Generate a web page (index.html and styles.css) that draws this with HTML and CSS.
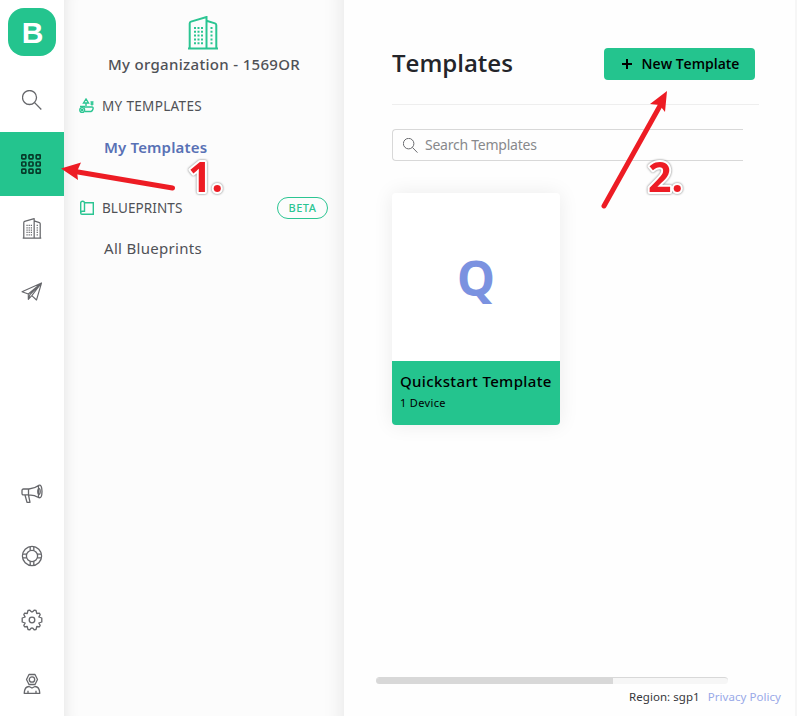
FILE: index.html
```html
<!DOCTYPE html>
<html lang="en">
<head>
<meta charset="utf-8">
<title>Templates</title>
<link rel="stylesheet" href="styles.css">
</head>
<body>
<svg class="defs" width="0" height="0">
  <symbol id="search" viewBox="0 0 20 20"><circle cx="7.5" cy="7.5" r="7"/><path d="M12.6 12.6 19.3 19.5"/></symbol>
  <symbol id="building" viewBox="0 0 32 34">
    <path d="M1 32.5H31M2.7 32V7.5Q2.7 6 4 5.6L19.5 1V32M19.5 4.8 28 7.4Q29.3 7.9 29.3 9.2V32"/>
    <path class="windows" d="M8 11V29M11.5 11V29M15 11V29M24.5 11V29"/>
  </symbol>
</svg>
<div class="app">
  <nav class="rail">
    <div class="logo">B</div>
    <a class="rail-item"><svg class="icon" width="20" height="20"><use href="#search"/></svg></a>
    <a class="rail-item active"><svg class="icon" width="20" height="20" viewBox="0 0 20 20">
      <g id="row"><rect x=".8" y=".8" width="4" height="4" rx=".8"/><rect x="8" y=".8" width="4" height="4" rx=".8"/><rect x="15.2" y=".8" width="4" height="4" rx=".8"/></g>
      <use href="#row" y="7.2"/><use href="#row" y="14.4"/></svg></a>
    <a class="rail-item"><svg class="icon building-small" width="20" height="21"><use href="#building"/></svg></a>
    <a class="rail-item"><svg class="icon plane" width="22" height="20" viewBox="0 0 22 20"><path d="M1 9.8 20.5 1 15.5 18 10.8 13.6 7.3 17.3V12ZM1 9.800 7.300 12M20.5 1 7.3 12M20.5 1 9 12.5 7.3 17.3M20.5 1 10.8 13.6"/></svg></a>
    <span class="spacer"></span>
    <a class="rail-item"><svg class="icon megaphone" width="22" height="20" viewBox="0 0 22 20"><path d="M2.5 5H8Q14 4.3 17.5 1.4V13.5Q14 11 8 10.8H2.5Q1 10.8 1 9.3V6.5Q1 5 2.5 5ZM7.5 5V10.8M4 11 6 18.3H9L7.5 11M17.5 1.4Q21 0 21 7.5T17.5 13.5"/><ellipse cx="18" cy="7.5" rx="1.2" ry="2.8"/></svg></a>
    <a class="rail-item"><svg class="icon" width="22" height="22" viewBox="0 0 22 22"><circle cx="11" cy="11" r="9.6"/><circle cx="11" cy="11" r="5.6"/><path d="M9.2 1.6V5.6M12.8 1.6V5.6M9.2 16.4V20.4M12.8 16.4V20.4M1.6 9.2H5.6M1.6 12.8H5.6M16.4 9.2H20.4M16.4 12.8H20.4"/></svg></a>
    <a class="rail-item"><svg class="icon" width="22" height="22" viewBox="0 0 22 22"><path d="M7 1.5 8.800 1.200Q11 4.800 13.200 1.200L15 1.500 15.800 4.500 18.500 4.200 19.200 5.700 17.800 8 20.800 9V13L17.800 14 19.200 16.300 18.500 17.800 15.800 17.500 15 20.500 13.200 20.800Q11 17.200 8.800 20.800L7 20.500 6.200 17.500 3.500 17.800 2.800 16.300 4.200 14 1.200 13V9L4.200 8 2.800 5.700 3.500 4.200 6.200 4.500Z"/><circle cx="11" cy="11" r="2.8"/></svg></a>
    <a class="rail-item"><svg class="icon" width="18" height="22" viewBox="0 0 18 22"><path d="M6 1.5H12L14.5 6.5 12 11.5H6L3.5 6.5ZM1.2 20.3Q1.6 13.5 6 13.5L9 15 12 13.5Q16.4 13.5 16.8 20.3ZM5 20V17.8M13 20V17.8"/><circle cx="9" cy="6.5" r="2.7"/></svg></a>
  </nav>

  <aside class="panel">
    <svg class="org-icon" width="32" height="34"><use href="#building"/></svg>
    <div class="org-name">My organization - 1569OR</div>
    <div class="section">
      <svg width="16" height="16" viewBox="0 0 16 16"><path d="M7 1 4.5 5H9.5ZM7 5V8M13 3.5V7.5M11.5 4H14.500M11.500 6H14.500M5 9H13Q14.5 9 14 11T12 13.5H6M1 8.500H6"/><circle cx="3.200" cy="12" r="2.4"/><circle cx="3.200" cy="12" r=".6"/></svg>
      <span class="my-templates">MY TEMPLATES</span>
    </div>
    <a class="link selected">My Templates</a>
    <div class="section second">
      <svg width="16" height="16" viewBox="0 0 16 16"><path d="M5.5 2.7H14.3V14.3H3Q1.700 14.300 1.700 13V3Q1.700 1.200 3.600 1.200T5.500 3V11.300H3.500Q1.700 11.300 1.700 13"/></svg>
      <span class="blueprints">BLUEPRINTS</span><span class="beta">BETA</span>
    </div>
    <a class="link">All Blueprints</a>
  </aside>

  <main class="main">
    <header class="header">
      <h1>Templates</h1>
      <button class="new"><svg width="12" height="12" viewBox="0 0 12 12"><path d="M6 1V11M1 6H11"/></svg><span>New Template</span></button>
    </header>
    <div class="search"><svg class="icon" width="15" height="15"><use href="#search"/></svg><span>Search Templates</span></div>
    <article class="card">
      <div class="letter">Q</div>
      <div class="info"><div class="name">Quickstart Template</div><div class="count">1 Device</div></div>
    </article>
    <span class="spacer"></span>
    <div class="scrollbar"><div class="thumb"></div></div>
    <footer class="footer"><span class="region">Region: sgp1</span><a class="privacy">Privacy Policy</a></footer>
  </main>
  <svg class="annotations" width="797" height="716" viewBox="0 0 797 716">
    <path class="shaft" d="M172.500 188 75 171.5M604 206 661 104"/>
    <path class="head" d="M61 168.5 81 162.5 77 171.5 78 180ZM667 91 665 112 659.500 105 650 104Z"/>
    <text x="188" y="192">1.</text>
    <text x="648" y="192">2.</text>
  </svg>
</div>
</body>
</html>
```
FILE: styles.css
```css
* { box-sizing: border-box; }
body { margin: 0; font-family: "Noto Sans", sans-serif; color: #4f5156; overflow: hidden; }
.defs { position: absolute; }
svg { fill: none; flex: none; }
.app { display: flex; width: 797px; height: 716px; position: relative; overflow: hidden; background: #fefefe; }
.spacer { flex: 1; }
.icon { stroke: #66676b; stroke-width: 1.3; stroke-linejoin: round; }
.windows { stroke-dasharray: 2 1.8; stroke-width: 2; }

.rail { width: 64px; background: #fff; display: flex; flex-direction: column; }
.logo { width: 48px; height: 48px; margin: 8px 8px 12px; border-radius: 16px; background: #24c48e; color: #fff; font: bold 30px/49px "Liberation Sans", sans-serif; text-align: center; padding-left: 1px; }
.rail-item { height: 64px; flex: none; display: flex; align-items: center; justify-content: center; }
.rail-item .icon { margin-right: 1px; }
.rail-item.active { background: #24c48e; }
.rail-item.active .icon { stroke: #073c2b; stroke-width: 1.7; margin-right: 2px; }
.building-small { stroke-width: 2; }
.plane { stroke-width: 1.1; }
.megaphone { margin-top: 4px; }

.panel { width: 280px; padding: 16px 16px 0; background: #fcfcfc; box-shadow: inset 16px 0 16px -16px #0000001c, inset -24px 0 20px -22px #00000016; display: flex; flex-direction: column; }
.org-icon { stroke: #2bc592; stroke-width: 2; align-self: center; margin-right: 2px; }
.org-name { height: 29px; line-height: 28px; text-align: center; font-size: 15px; font-weight: 500; letter-spacing: .32px; white-space: nowrap; }
.section { height: 22px; margin-top: 16px; display: flex; align-items: center; gap: 7px; font-size: 13.500px; }
.section svg { stroke: #2bc592; stroke-width: 1.4; margin-left: -1px; }
.my-templates { letter-spacing: .33px; }
.blueprints { letter-spacing: .1px; }
.section.second { margin-top: 38px; }
.link { height: 24px; margin: 18px 0 0 24px; line-height: 24px; font-size: 15px; letter-spacing: .3px; }
.link.selected { color: #5871b5; font-weight: 600; letter-spacing: .15px; }
.section.second + .link { margin-top: 17px; }
.beta { margin-left: auto; width: 51px; height: 22px; border: 1px solid #2bc592; border-radius: 11px; color: #2bc592; font-size: 11px; font-weight: 500; line-height: 20px; text-align: center; letter-spacing: .5px; }

.main { width: 453px; padding: 24px 0 0 48px; background: #fefefe; display: flex; flex-direction: column; border-right: 2px solid #f6f6f6; }
.header { width: 367px; height: 81px; padding-right: 4px; border-bottom: 1px solid #eee; display: flex; align-items: center; justify-content: space-between; }
h1 { margin: -3px 0 0; color: #24252a; font: 600 24px "Open Sans", sans-serif; }
.new { width: 151px; height: 32px; padding: 0 0 0 1px; border: 0; border-radius: 4px; background: #24c48e; color: #000; font: 600 14px "Open Sans", sans-serif; display: flex; align-items: center; justify-content: center; gap: 9px; white-space: nowrap; }
.new span { margin-top: -1px; }
.new svg { stroke: #000; stroke-width: 2; }
.search { width: 351px; height: 32px; margin-top: 24px; padding-left: 10px; border: 1px solid #d8d8d8; border-right: 0; border-radius: 4px 0 0 4px; display: flex; align-items: center; gap: 7px; font-size: 14px; letter-spacing: -.24px; color: #88898c; }
.search span { margin-top: -1px; }
.card { width: 168px; height: 232px; margin-top: 32px; border-radius: 4px; overflow: hidden; background: #fff; box-shadow: 0 0 20px #00000014; }
.letter { height: 168px; display: flex; align-items: center; justify-content: center; color: #7b92e0; font-size: 48px; font-weight: 700; padding-top: 1px; }
.info { height: 64px; padding: 8px; background: #24c48e; color: #000; white-space: nowrap; }
.name { font-size: 15px; line-height: 24px; font-weight: 500; letter-spacing: .35px; }
.count { font-size: 11px; line-height: 20px; letter-spacing: .35px; }
.scrollbar { width: 352px; height: 7px; margin-left: -16px; border-top: 1px solid #d8d8d8; border-radius: 4px; overflow: hidden; background: #f6f6f6; }
.thumb { width: 237px; height: 6px; background: #d8d8d8; }
.footer { height: 32px; padding: 0 14px 7px 0; display: flex; align-items: center; justify-content: flex-end; gap: 8px; font-size: 11.500px; letter-spacing: .05px; color: #35363a; }
.privacy { color: #99a9e8; }
.annotations { position: absolute; left: 0; top: 0; pointer-events: none; }
.shaft { stroke: #ed1c24; stroke-width: 5; stroke-linecap: round; }
.head { fill: #ed1c24; }
.annotations text { font: 700 41px "Noto Sans", sans-serif; fill: #ed1c24; stroke: #fff; stroke-width: 4px; paint-order: stroke; stroke-linejoin: round; filter: drop-shadow(0 0 1px #777); }
```
